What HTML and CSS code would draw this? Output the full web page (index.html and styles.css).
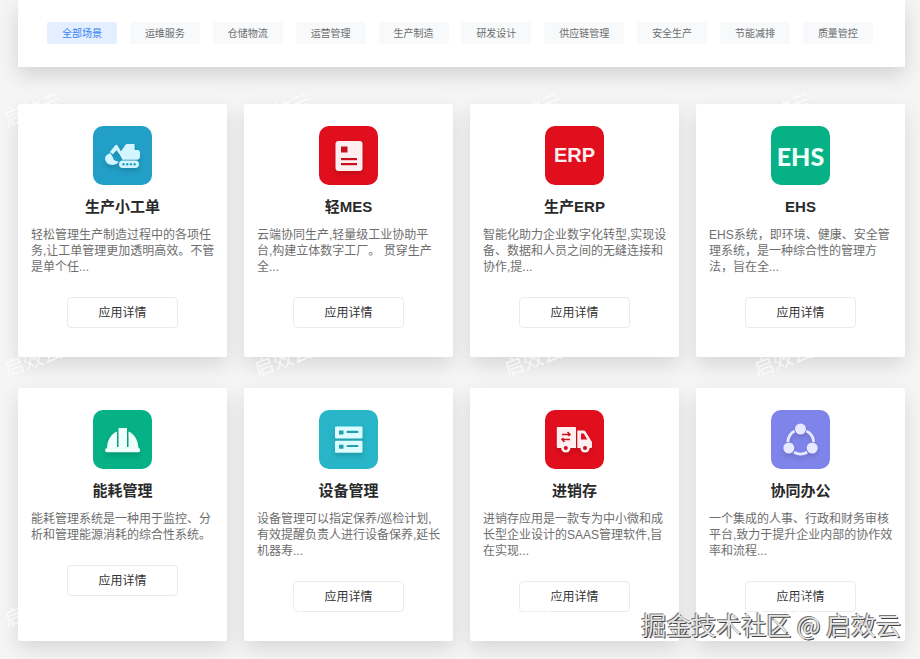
FILE: index.html
```html
<!DOCTYPE html>
<html lang="zh-CN">
<head>
<meta charset="utf-8">
<meta name="viewport" content="width=device-width, initial-scale=1">
<title>应用场景</title>
<link rel="stylesheet" href="styles.css">
</head>
<body>
<div class="page">
  <nav class="filters">
    <button class="chip chip-active" type="button">全部场景</button>
    <button class="chip" type="button">运维服务</button>
    <button class="chip" type="button">仓储物流</button>
    <button class="chip" type="button">运营管理</button>
    <button class="chip" type="button">生产制造</button>
    <button class="chip" type="button">研发设计</button>
    <button class="chip" type="button">供应链管理</button>
    <button class="chip" type="button">安全生产</button>
    <button class="chip" type="button">节能减排</button>
    <button class="chip" type="button">质量管控</button>
  </nav>

  <main class="cards">
    <article class="card">
      <div class="icon blue">
        <svg viewBox="0 0 59 59" aria-hidden="true">
          <g fill="#d3f5ff">
            <path d="M16.500 26.500 22 19.500q1.200-1.500 2.500 0l3.500 6 4.500-6.700q.6-.8 1.500-.8h6.800q.8 0 .8.800v5.200h2.600q2.800 0 2.800 2.500v3.500q0 3.800-3.500 3.800H29.500l-2.500-4.800-3.500-4.700-3.500 4z"/>
            <path d="M17.500 27 20 31.500q0 3.500 5.500 4-1.500 3.200-6 3.400-7-.4-7.500-6.200.3-4.200 5.500-5.700z"/>
            <rect x="26" y="34.500" width="20" height="7.500" rx="3.700"/>
          </g>
          <path d="m17.300 26.300 5 7" stroke="#229fc7" stroke-width="1"/>
          <g fill="#229fc7"><circle cx="30.500" cy="38.300" r="1.200"/><circle cx="34.200" cy="38.300" r="1.200"/><circle cx="37.900" cy="38.300" r="1.200"/><circle cx="41.600" cy="38.300" r="1.200"/></g>
        </svg>
      </div>
      <h2 class="title">生产小工单</h2>
      <p class="desc">轻松管理生产制造过程中的各项任务,让工单管理更加透明高效。不管是单个任...</p>
      <button class="detail" type="button">应用详情</button>
    </article>

    <article class="card">
      <div class="icon red">
        <svg viewBox="0 0 59 59" aria-hidden="true">
          <rect x="16.500" y="15" width="27" height="30" rx="3" fill="#ffeef0"/>
          <g fill="#c8101d"><rect x="22" y="20.500" width="6.500" height="6"/><rect x="22" y="32" width="16" height="2.200"/><rect x="22" y="37" width="16" height="2.200"/></g>
        </svg>
      </div>
      <h2 class="title">轻MES</h2>
      <p class="desc">云端协同生产,轻量级工业协助平台,构建立体数字工厂。 贯穿生产全...</p>
      <button class="detail" type="button">应用详情</button>
    </article>

    <article class="card">
      <div class="icon red icon-erp">ERP</div>
      <h2 class="title">生产ERP</h2>
      <p class="desc">智能化助力企业数字化转型,实现设备、数据和人员之间的无缝连接和协作,提...</p>
      <button class="detail" type="button">应用详情</button>
    </article>

    <article class="card">
      <div class="icon green icon-ehs">EHS</div>
      <h2 class="title">EHS</h2>
      <p class="desc">EHS系统，即环境、健康、安全管理系统，是一种综合性的管理方法，旨在全...</p>
      <button class="detail" type="button">应用详情</button>
    </article>

    <article class="card">
      <div class="icon green">
        <svg viewBox="0 0 59 59" aria-hidden="true">
          <g fill="#effffa">
            <path d="M14 38c.3-8 4-14 10-16.500V37h1.500V18.500q0-.5.500-.5h7.500q.5 0 .5.500V37h1.500V21.500C41.500 24 45 30 45.500 38q1.700.6 1.700 2.200 0 2.100-2 2.100H14q-2 0-2-2.100 0-1.600 2-2.200z"/>
          </g>
        </svg>
      </div>
      <h2 class="title">能耗管理</h2>
      <p class="desc">能耗管理系统是一种用于监控、分析和管理能源消耗的综合性系统。</p>
      <button class="detail" type="button">应用详情</button>
    </article>

    <article class="card">
      <div class="icon cyan">
        <svg viewBox="0 0 59 59" aria-hidden="true">
          <g fill="#dcfcff"><rect x="16" y="16.500" width="27.500" height="12" rx="1.200"/><rect x="16" y="30.700" width="27.500" height="12" rx="1.200"/></g>
          <g fill="#209fae"><rect x="20" y="20.500" width="4.500" height="4"/><rect x="27.500" y="20.700" width="12" height="2.200" rx="1"/><rect x="20" y="34.700" width="4.500" height="4"/><rect x="27.500" y="34.900" width="12" height="2.200" rx="1"/></g>
        </svg>
      </div>
      <h2 class="title">设备管理</h2>
      <p class="desc">设备管理可以指定保养/巡检计划,有效提醒负责人进行设备保养,延长机器寿...</p>
      <button class="detail" type="button">应用详情</button>
    </article>

    <article class="card">
      <div class="icon red">
        <svg viewBox="0 0 59 59" aria-hidden="true">
          <g fill="#ffeef0">
            <path d="M12.500 17h17.700q.8 0 .8.800V38H12.800q-1 0-1-1V17.700q0-.7.700-.7z"/>
            <path d="M32.300 20.500h6.500q1 0 1.700 1l5.500 9 1 1.500v5q0 1-1 1H32.300z"/>
            <circle cx="20.800" cy="38" r="4.600"/><circle cx="40" cy="38" r="4.600"/>
          </g>
          <path d="M36 23.500h2.700l3.500 6H36z" fill="#e10e1d"/>
          <g fill="#c8101d"><circle cx="20.800" cy="38" r="2"/><circle cx="40" cy="38" r="2"/></g>
          <path d="M17 24.500h8m-2.500-2.500 2.500 2.500-1.500 1.500M25 29.500h-8m2.500 2.500L17 29.500l1.500-1.500" fill="none" stroke="#c8101d" stroke-width="1.500"/>
        </svg>
      </div>
      <h2 class="title">进销存</h2>
      <p class="desc">进销存应用是一款专为中小微和成长型企业设计的SAAS管理软件,旨在实现...</p>
      <button class="detail" type="button">应用详情</button>
    </article>

    <article class="card">
      <div class="icon violet">
        <svg viewBox="0 0 59 59" aria-hidden="true">
          <g fill="none" stroke="#e6e9ff" stroke-width="2.800">
            <path d="M16.800 32A13.500 13.500 0 0 1 23.500 21"/>
            <path d="M35.500 21A13.500 13.500 0 0 1 42.700 32"/>
            <path d="M23 42.200a13.500 13.500 0 0 0 13.200 0"/>
          </g>
          <g fill="#e6e9ff"><circle cx="29.500" cy="19" r="5.500"/><circle cx="17.800" cy="38" r="5.500"/><circle cx="41.200" cy="38" r="5.500"/></g>
        </svg>
      </div>
      <h2 class="title">协同办公</h2>
      <p class="desc">一个集成的人事、行政和财务审核平台,致力于提升企业内部的协作效率和流程...</p>
      <button class="detail" type="button">应用详情</button>
    </article>
  </main>

  <div class="watermarks" aria-hidden="true">
    <span>启效云</span><span>启效云</span><span>启效云</span><span>启效云</span>
    <span>启效云</span><span>启效云</span><span>启效云</span><span>启效云</span>
    <span>启效云</span><span>启效云</span><span>启效云</span><span>启效云</span>
  </div>
  <div class="credit">掘金技术社区 @ 启效云</div>
</div>
</body>
</html>
```
FILE: styles.css
```css
* {
  box-sizing: border-box;
}

body {
  margin: 0;
  background: #f5f5f5;
  font-family: "Liberation Sans", "Noto Sans CJK SC", sans-serif;
  color: #2a2a2a;
}

button {
  font-family: inherit;
  cursor: pointer;
}

.page {
  position: relative;
  min-height: 100vh;
  padding: 0 15px 18px 18px;
  overflow: hidden;
}

.filters {
  display: flex;
  justify-content: space-between;
  padding: 22px 32px 23px 29px;
  background: #fff;
  box-shadow: 0 8px 20px rgba(0, 0, 0, 0.14);
}

.chip {
  height: 22px;
  padding: 0 15px 1px;
  border: 0;
  border-radius: 2px;
  background: #f7f9fa;
  color: #6c6c6c;
  font-size: 10px;
  line-height: 23px;
  white-space: nowrap;
}

.chip-active {
  background: #e3eeff;
  color: #3583f7;
}

.cards {
  display: grid;
  grid-template-columns: repeat(4, 1fr);
  gap: 31px 17px;
  margin-top: 37px;
}

.card {
  display: flex;
  flex-direction: column;
  align-items: center;
  padding: 22px 12px 29px;
  border-radius: 2px;
  background: #fff;
  box-shadow: 0 8px 20px rgba(0, 0, 0, 0.12);
}

.icon {
  display: flex;
  align-items: center;
  justify-content: center;
  width: 59px;
  height: 59px;
  border-radius: 10px;
  color: #fff;
  font-weight: 700;
}

.icon svg {
  width: 59px;
  height: 59px;
  filter: drop-shadow(0 3px 2px rgba(0, 0, 0, 0.14));
}

.icon-erp {
  color: #ffeef0;
  font-size: 20px;
}

.icon-ehs {
  color: #effffa;
  font-family: Lato, sans-serif;
  font-size: 25px;
  font-weight: 900;
}

.blue { background: #229fc7; }
.red { background: #e10e1d; }
.green { background: #05b185; }
.cyan { background: #27b5c7; }
.violet { background: #7f84ea; }

.title {
  margin: 11px 0 0;
  font-size: 15px;
  line-height: 22px;
}

.desc {
  align-self: stretch;
  margin: 9px 0 0;
  padding-left: 1px;
  color: #6e6e6e;
  font-size: 12px;
  line-height: 16px;
}

.detail {
  width: 111px;
  height: 31px;
  margin-top: 22px;
  padding: 0 0 2px;
  border: 1px solid #ebebeb;
  border-radius: 4px;
  background: #fff;
  color: #333;
  font-size: 12px;
}

.watermarks {
  position: absolute;
  inset: 97px 0 0;
  display: grid;
  grid-template-columns: repeat(4, 250px);
  grid-auto-rows: 250px;
  padding-left: 3px;
  color: rgba(255, 255, 255, 0.7);
  font-size: 20px;
  line-height: 26px;
  pointer-events: none;
}

.watermarks span {
  justify-self: start;
  align-self: start;
  transform: rotate(-20deg);
}

.credit {
  position: absolute;
  right: 19px;
  bottom: 18px;
  color: #e4e4e4;
  font-family: "Noto Sans CJK SC", sans-serif;
  font-size: 25px;
  line-height: 34px;
  text-shadow: 1px 1px 0 #444, -1px -1px 0 #777;
  white-space: nowrap;
}
```
